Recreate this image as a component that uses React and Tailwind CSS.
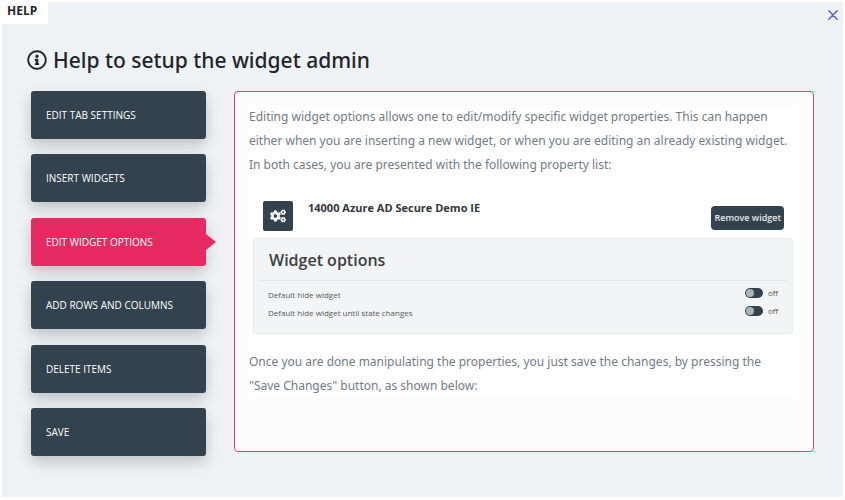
import React, { useState } from 'react';
import { FaCogs } from 'react-icons/fa';

const tabs = [
  'Edit tab settings',
  'Insert widgets',
  'Edit widget options',
  'Add rows and columns',
  'Delete items',
  'Save',
];

const InfoIcon = () => (
  <svg viewBox="0 0 512 512" className="size-5 shrink-0" fill="currentColor" aria-hidden="true">
    <path d="M256 8C119.043 8 8 119.083 8 256c0 136.997 111.043 248 248 248s248-111.003 248-248C504 119.083 392.957 8 256 8zm0 448c-110.532 0-200-89.431-200-200 0-110.495 89.472-200 200-200 110.491 0 200 89.471 200 200 0 110.53-89.431 200-200 200zm0-338c23.196 0 42 18.804 42 42s-18.804 42-42 42-42-18.804-42-42 18.804-42 42-42zm56 254c0 6.627-5.373 12-12 12h-88c-6.627 0-12-5.373-12-12v-24c0-6.627 5.373-12 12-12h12v-64h-12c-6.627 0-12-5.373-12-12v-24c0-6.627 5.373-12 12-12h64c6.627 0 12 5.373 12 12v100h12c6.627 0 12 5.373 12 12v24z" />
  </svg>
);

const ToggleRow = ({ id, label }) => {
  const [on, setOn] = useState(false);

  return (
    <div className="flex items-start justify-between text-[8px] leading-[18px] text-[#55595c]">
      <label htmlFor={id}>{label}</label>
      <span className="flex items-center gap-[5px] leading-[14px]">
        <input
          id={id}
          type="checkbox"
          checked={on}
          onChange={(e) => setOn(e.target.checked)}
          className="flex h-[10px] w-[18px] appearance-none items-center rounded-full bg-[#32424f] px-px before:size-2 before:rounded-full before:bg-[#a9b3ba] checked:justify-end"
        />
        <span className="w-[10px]">{on ? 'on' : 'off'}</span>
      </span>
    </div>
  );
};

const App = () => {
  const [activeTab, setActiveTab] = useState('Edit widget options');

  return (
    <div className="min-h-screen bg-white px-[2px] pt-[2px] pb-[3px] font-['Open_Sans',sans-serif]">
      <div className="min-h-[495px] bg-[#eef2f5]">
        <header className="flex items-start justify-between">
          <div className="h-[22px] bg-white pr-[11px] pl-[5px] text-[12px] leading-[18px] font-bold text-[#212529]">
            HELP
          </div>
          <button type="button" aria-label="Close" className="mt-2 mr-[5px] text-[#5362c4]">
            <svg viewBox="0 0 10 10" className="size-[10px]" fill="none" stroke="currentColor" strokeWidth="1.5" strokeLinecap="round">
              <path d="M0.8 0.8L9.2 9.2M9.2 0.8L0.8 9.2" />
            </svg>
          </button>
        </header>

        <h1 className="flex items-center gap-[6px] pt-5 pb-[15px] pl-[25px] font-['Noto_Sans',sans-serif] text-[21px] leading-8 font-medium text-[#212529]">
          <InfoIcon />
          Help to setup the widget admin
        </h1>

        <div className="flex items-start pr-[29px] pl-[29px]">
          <nav className="flex min-h-[365px] w-[175px] shrink-0 flex-col justify-between">
            {tabs.map((tab) => (
              <button
                key={tab}
                type="button"
                onClick={() => setActiveTab(tab)}
                className={`relative h-12 rounded-[3px] px-[15px] pt-px text-left text-[10px] font-medium text-white uppercase shadow-[0_6px_14px_rgba(0,0,0,0.2)] ${
                  tab === activeTab
                    ? 'bg-[#e82a63] after:absolute after:top-4 after:left-full after:border-y-8 after:border-l-[10px] after:border-y-transparent after:border-l-[#e82a63]'
                    : 'bg-[#32424f]'
                }`}
              >
                {tab}
              </button>
            ))}
          </nav>

          <section className="ml-7 min-h-[361px] flex-1 rounded border border-[#e8406f] bg-[#fcfcfc] px-[14px] py-[13px] font-['Noto_Sans',sans-serif] text-[12px] leading-6 text-[#727a82]">
            <div className="bg-white">
              <p>
                Editing widget options allows one to edit/modify specific widget properties. This can happen
                either when you are inserting a new widget, or when you are editing an already existing widget.
                In both cases, you are presented with the following property list:
              </p>

              {/* widget preview */}
              <div className="mt-6 mr-[6px] mb-4 ml-1 font-['Open_Sans',sans-serif]">
                <div className="flex items-start pr-[9px] pl-[10px]">
                  <div className="flex size-[30px] items-center justify-center rounded-[2px] bg-[#32424f] text-white">
                    <FaCogs className="size-4" />
                  </div>
                  <h2 className="ml-[15px] text-[11px] leading-[14px] font-bold text-[#333639]">14000 Azure AD Secure Demo IE</h2>
                  <button
                    type="button"
                    className="mt-[5px] ml-auto h-6 rounded bg-[#32424f] px-[3px] text-[9px] font-semibold text-[#e4e8ea]"
                  >
                    Remove widget
                  </button>
                </div>

                <div className="mt-[7px] rounded-[3px] border border-[#e9ebec] bg-[#f3f4f5] px-[5px] pb-[11px]">
                  <h3 className="border-b border-[#e4e6e8] px-[10px] pt-[6px] pb-[5px] text-[16px] leading-[30px] font-semibold text-[#3c3f42]">
                    Widget options
                  </h3>
                  <div className="px-[9px] pt-[5px]">
                    <ToggleRow id="hide-default" label="Default hide widget" />
                    <ToggleRow id="hide-until-change" label="Default hide widget until state changes" />
                  </div>
                </div>
              </div>

              <p className="pr-5">
                Once you are done manipulating the properties, you just save the changes, by pressing the
                "Save Changes" button, as shown below:
              </p>
            </div>
          </section>
        </div>
      </div>
    </div>
  );
};

export default App;
